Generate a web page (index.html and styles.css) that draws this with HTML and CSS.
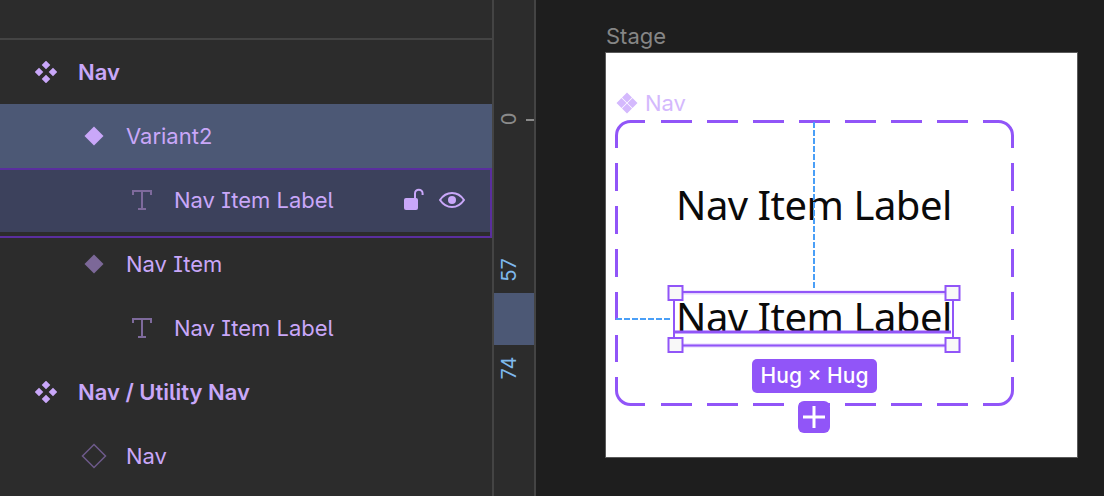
FILE: index.html
```html
<!DOCTYPE html>
<html lang="en">
<head>
    <meta charset="UTF-8">
    <meta name="viewport" content="width=device-width, initial-scale=1.0">
    <title>Stage layers</title>
    <link rel="stylesheet" href="styles.css">
</head>
<body>
    <svg class="defs" width="0" height="0" aria-hidden="true">
        <symbol id="iconSet" viewBox="0 0 22 22">
            <path d="M11 -0.300l4.300 4.300-4.300 4.300-4.300-4.300zM4 6.700l4.300 4.300-4.300 4.300-4.300-4.300zM18 6.700l4.300 4.300-4.300 4.300-4.300-4.300zM11 13.700l4.300 4.300-4.300 4.300-4.300-4.300z" fill="currentColor"/>
        </symbol>
        <symbol id="iconSetLarge" viewBox="0 0 22 22">
            <path d="M11 0.500l5 5-5 5-5-5zM5.500 6l5 5-5 5-5-5zM16.500 6l5 5-5 5-5-5zM11 11.500l5 5-5 5-5-5z" fill="currentColor"/>
        </symbol>
        <symbol id="iconText" viewBox="0 0 20 20">
            <path d="M1 5V1H19V5M10 1V19M6 19H14" fill="none" stroke="currentColor" stroke-width="2"/>
        </symbol>
    </svg>

    <div class="app">
        <!-- Layers list -->
        <div class="panel">
            <div class="panel-top"></div>

            <div class="row row-set">
                <svg class="icon icon-set"><use href="#iconSet"/></svg>
                <span class="row-label">Nav</span>
            </div>
            <div class="row row-hover depth-1">
                <svg class="icon icon-diamond" viewBox="0 0 20 20"><path d="M10 0.500L19.500 10 10 19.500 0.500 10z" fill="currentColor"/></svg>
                <span class="row-label">Variant2</span>
            </div>
            <div class="row row-selected depth-2">
                <svg class="icon icon-text"><use href="#iconText"/></svg>
                <span class="row-label">Nav Item Label</span>
                <div class="row-actions">
                    <svg class="icon-lock" viewBox="0 0 20 22">
                        <rect x="0" y="10" width="14" height="12" rx="2" fill="currentColor"/>
                        <path d="M11 11V5.500a3.800 3.800 0 0 1 7.600 0V7" fill="none" stroke="currentColor" stroke-width="2"/>
                    </svg>
                    <svg class="icon-eye" viewBox="0 0 26 16">
                        <path d="M1 8C4 3.500 8 1 13 1s9 2.500 12 7c-3 4.500-7 7-12 7S4 12.500 1 8z" fill="none" stroke="currentColor" stroke-width="2"/>
                        <circle cx="13" cy="8" r="4" fill="currentColor"/>
                    </svg>
                </div>
            </div>
            <div class="row depth-1">
                <svg class="icon icon-diamond muted" viewBox="0 0 20 20"><path d="M10 0.500L19.500 10 10 19.500 0.500 10z" fill="currentColor"/></svg>
                <span class="row-label">Nav Item</span>
            </div>
            <div class="row depth-2">
                <svg class="icon icon-text"><use href="#iconText"/></svg>
                <span class="row-label">Nav Item Label</span>
            </div>
            <div class="row row-set">
                <svg class="icon icon-set"><use href="#iconSet"/></svg>
                <span class="row-label">Nav / Utility Nav</span>
            </div>
            <div class="row depth-1">
                <svg class="icon icon-diamond icon-outline" viewBox="0 0 26 26"><path d="M13 1.500L24.500 13 13 24.500 1.500 13z" fill="none" stroke="currentColor" stroke-width="1.500"/></svg>
                <span class="row-label">Nav</span>
            </div>
        </div>

        <!-- Vertical ruler -->
        <div class="ruler">
            <span class="ruler-num ruler-zero">0</span>
            <span class="ruler-tick"></span>
            <span class="ruler-num ruler-top">57</span>
            <span class="ruler-range"></span>
            <span class="ruler-num ruler-bottom">74</span>
        </div>

        <!-- Canvas -->
        <div class="canvas">
            <p class="stage-name">Stage</p>
            <div class="stage">
                <div class="frame-name">
                    <svg class="frame-icon"><use href="#iconSetLarge"/></svg>
                    <span>Nav</span>
                </div>
                <p class="node-text node-first">Nav Item Label</p>
                <p class="node-text node-second">Nav Item Label</p>

                <svg class="overlay" viewBox="606 53 471 404">
                    <g class="frame-line">
                        <path d="M616.500 148V135.500a14 14 0 0 1 14-14H645"/>
                        <path class="dash-h" d="M661 121.500H970"/>
                        <path d="M983 121.500H998.500a14 14 0 0 1 14 14V148"/>
                        <path class="dash-v" d="M616.500 163V362"/>
                        <path class="dash-v" d="M1012.500 163V362"/>
                        <path d="M616.500 377V390.500a14 14 0 0 0 14 14H645"/>
                        <path d="M1012.500 377V390.500a14 14 0 0 1 -14 14H983"/>
                        <path class="dash-h" d="M661 404.500H970"/>
                    </g>
                    <path class="guide" d="M814 122V290"/>
                    <path class="guide" d="M616 319H672"/>
                    <path class="select-halo" d="M675 292.500H953M675 345.500H953"/>
                    <rect class="select-line" x="674" y="292" width="279" height="53.500"/>
                    <path class="baseline" d="M675 332H951"/>
                    <g class="handles">
                        <rect x="668.500" y="286" width="14" height="14"/>
                        <rect x="945.500" y="286" width="14" height="14"/>
                        <rect x="668.500" y="338" width="14" height="14"/>
                        <rect x="945.500" y="338" width="14" height="14"/>
                    </g>
                </svg>

                <span class="hug-badge">Hug × Hug</span>
                <button class="add-btn" type="button">
                    <svg viewBox="0 0 24 24" width="24" height="24"><path d="M12 1V23M1 12H23" stroke="#fff" stroke-width="3"/></svg>
                </button>
            </div>
        </div>
    </div>
</body>
</html>
```

FILE: styles.css
```css
* {
    box-sizing: border-box;
}

body {
    margin: 0;
    background-color: #1e1e1e;
    font-family: Inter, "Noto Sans", sans-serif;
    overflow: hidden;
}

.defs {
    position: absolute;
}

.app {
    display: flex;
    height: 496px;
}

/* Layers list */
.panel {
    width: 492px;
    flex-shrink: 0;
    background-color: #2c2c2c;
}

.panel-top {
    height: 40px;
    border-bottom: 2px solid #444444;
}

.row {
    position: relative;
    display: flex;
    align-items: center;
    height: 64px;
    padding-left: 78px;
    font-size: 22px;
    font-feature-settings: "cv05", "cv08";
    color: #c9a7f9;
}

.row-set {
    font-weight: 600;
}

.depth-1 {
    padding-left: 126px;
}

.depth-2 {
    padding-left: 174px;
}

.row-hover {
    background-color: #4c5875;
}

.row-selected {
    background-color: #3c415c;
}

.row-selected::after {
    content: "";
    position: absolute;
    top: 0;
    left: -2px;
    right: 0;
    height: 66px;
    border: 2px solid #5a2e9e;
}

.row-label {
    white-space: nowrap;
}

.icon {
    position: absolute;
    overflow: visible;
}

.icon-set {
    left: 35px;
    top: 21px;
    width: 22px;
    height: 22px;
}

.icon-diamond {
    left: 84px;
    top: 22px;
    width: 20px;
    height: 20px;
}

.icon-diamond.muted {
    color: #7c6898;
}

.icon-outline {
    left: 81px;
    top: 19px;
    width: 26px;
    height: 26px;
    color: #6d5a8a;
}

.icon-text {
    left: 132px;
    top: 22px;
    width: 20px;
    height: 20px;
    color: #7e6a9c;
}

.row-actions {
    display: flex;
    align-items: center;
    gap: 15px;
    margin-left: auto;
    margin-right: 27px;
}

.icon-lock {
    width: 20px;
    height: 22px;
    margin-top: -2px;
}

.icon-eye {
    width: 26px;
    height: 16px;
}

/* Ruler */
.ruler {
    position: relative;
    width: 44px;
    flex-shrink: 0;
    background-color: #2c2c2c;
    border-left: 2px solid #444444;
    border-right: 2px solid #444444;
    font-size: 20px;
}

.ruler-num {
    position: absolute;
    left: 0;
    width: 30px;
    text-align: center;
    line-height: 20px;
    transform: rotate(-90deg);
    color: #7fb9ec;
}

.ruler-zero {
    top: 109px;
    color: #8a8a8a;
}

.ruler-tick {
    position: absolute;
    top: 119px;
    left: 32px;
    width: 8px;
    height: 2px;
    background-color: #8a8a8a;
}

.ruler-top {
    top: 260px;
}

.ruler-range {
    position: absolute;
    top: 293px;
    left: 0;
    right: 0;
    height: 52px;
    background-color: #4c5875;
}

.ruler-bottom {
    top: 358px;
}

/* Canvas */
.canvas {
    flex: 1;
    padding: 23px 0 0 70px;
}

.stage-name {
    margin: 0;
    height: 30px;
    font-size: 22px;
    line-height: 26px;
    color: #868686;
}

.stage {
    position: relative;
    width: 471px;
    height: 404px;
    background-color: #ffffff;
    box-shadow: 0 0 0 1px #5a5a5a;
}

.frame-name {
    position: absolute;
    top: 38px;
    left: 10px;
    display: flex;
    align-items: center;
    gap: 7px;
    font-size: 22px;
    line-height: 24px;
    color: #d4b9fd;
}

.frame-icon {
    width: 22px;
    height: 22px;
}

.node-text {
    position: absolute;
    left: 70px;
    margin: 0;
    font-family: "Noto Sans", sans-serif;
    font-size: 40px;
    letter-spacing: -0.500px;
    line-height: 54px;
    white-space: nowrap;
    color: #0a0a0a;
}

.node-first {
    top: 125px;
}

.node-second {
    top: 237px;
}

.overlay {
    position: absolute;
    inset: 0;
    width: 100%;
    height: 100%;
}

.frame-line path {
    fill: none;
    stroke: #9155f8;
    stroke-width: 3;
}

.frame-line .dash-h {
    stroke-dasharray: 31 15;
}

.frame-line .dash-v {
    stroke-dasharray: 28 15;
}

.guide {
    fill: none;
    stroke: #4a9ff7;
    stroke-width: 2;
    stroke-dasharray: 6 2;
}

.select-halo {
    fill: none;
    stroke: #e3d4fd;
    stroke-width: 4;
}

.select-line {
    fill: none;
    stroke: #9155f8;
    stroke-width: 2;
}

.baseline {
    fill: none;
    stroke: #9155f8;
    stroke-width: 3;
}

.handles rect {
    fill: #f8f8f8;
    stroke: #9155f8;
    stroke-width: 2;
}

.hug-badge {
    position: absolute;
    top: 306px;
    left: 146px;
    width: 125px;
    height: 34px;
    border-radius: 5px;
    background-color: #9155f8;
    color: #ffffff;
    font-size: 21px;
    font-weight: 500;
    line-height: 34px;
    text-align: center;
    white-space: nowrap;
}

.add-btn {
    position: absolute;
    top: 348px;
    left: 192px;
    display: flex;
    align-items: center;
    justify-content: center;
    width: 32px;
    height: 32px;
    padding: 0;
    border: 0;
    border-radius: 6px;
    background-color: #9155f8;
}
```
